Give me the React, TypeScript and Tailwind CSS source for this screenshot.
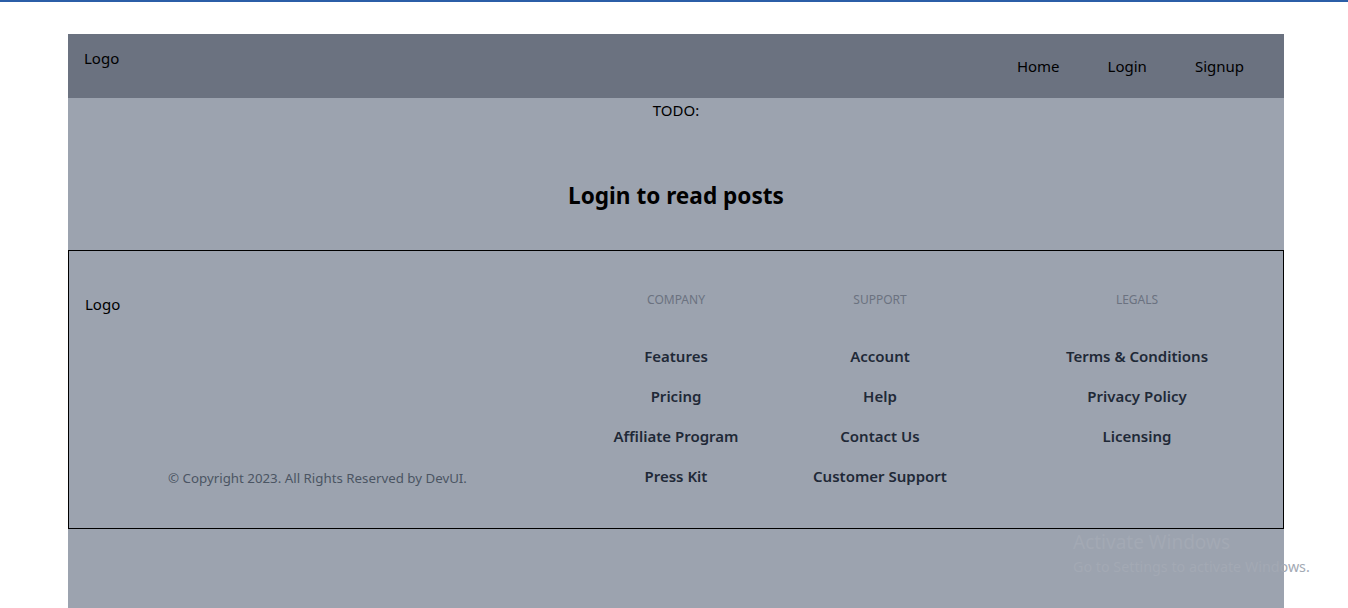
import React from 'react';

const company = ['Features', 'Pricing', 'Affiliate Program', 'Press Kit'];
const support = ['Account', 'Help', 'Contact Us', 'Customer Support'];
const legals = ['Terms & Conditions', 'Privacy Policy', 'Licensing'];

const FooterColumn: React.FC<{ title: string; links: string[]; className: string }> = ({ title, links, className }) => (
  <div className={`flex flex-col items-center text-center ${className}`}>
    <h3 className="text-xs uppercase text-[#6b7280] leading-4">{title}</h3>
    <ul className="mt-9 space-y-4">
      {links.map((l) => (
        <li key={l}>
          <a href="#" className="text-[15px] font-semibold leading-6 text-[#1f2937]">
            {l}
          </a>
        </li>
      ))}
    </ul>
  </div>
);

export default function App() {
  return (
    <div className="relative min-h-[608px] bg-white text-black" style={{ fontFamily: '"Noto Sans", "Open Sans", sans-serif' }}>
      <div className="h-[2px] bg-[#2b5ea7]" />
      <div className="ml-[68px] mt-8 w-[1216px] bg-[#9ca3af] pb-20">
        <header className="flex h-16 justify-between bg-[#6b7280] pl-4 pr-4">
          <div className="pt-3 text-[15px] leading-6">Logo</div>
          <nav className="flex items-center">
            <a href="#" className="px-6 text-[15px] leading-6">Home</a>
            <a href="#" className="px-6 text-[15px] leading-6">Login</a>
            <a href="#" className="px-6 text-[15px] leading-6">Signup</a>
          </nav>
        </header>

        <p className="text-center text-[15px] leading-6">TODO:</p>
        <h1 className="mt-[58px] mb-[38px] text-center text-[22.6px] font-bold leading-8">Login to read posts</h1>

        <footer className="flex border border-black pt-[41px] pb-10">
          <div className="flex w-[497px] flex-col">
            <span className="pl-4 text-[15px] leading-6">Logo</span>
            <p className="mt-auto text-center text-[13.3px] leading-5 text-[#4b5563]">
              © Copyright 2023. All Rights Reserved by DevUI.
            </p>
          </div>
          <FooterColumn title="Company" links={company} className="w-[220px]" />
          <FooterColumn title="Support" links={support} className="w-[188px]" />
          <FooterColumn title="Legals" links={legals} className="ml-[63px] w-[200px]" />
        </footer>
      </div>

      <div className="pointer-events-none absolute left-[1073px] top-[531px] leading-tight">
        <div className="text-[19px] text-[#a3a9b4]">Activate Windows</div>
        <div className="mt-[3px] text-[14.3px] text-[#a3a9b4]">Go to Settings to activate Windows.</div>
      </div>
    </div>
  );
}
